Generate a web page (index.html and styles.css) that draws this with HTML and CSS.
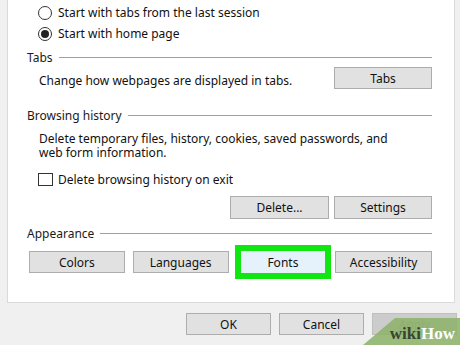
FILE: index.html
```html
<!DOCTYPE html>
<html>
<head>
<meta charset="utf-8">
<link rel="stylesheet" href="styles.css">
</head>
<body>
<div class="panel">
  <div class="radio-row"><span class="radio"></span><span>Start with tabs from the last session</span></div>
  <div class="radio-row"><span class="radio checked"></span><span>Start with home page</span></div>

  <div class="group-head head-tabs"><span>Tabs</span><span class="rule"></span></div>
  <div class="tabs-row">
    <span class="tabs-text">Change how webpages are displayed in tabs.</span>
    <button class="btn btn-tabs">Tabs</button>
  </div>

  <div class="group-head head-history"><span>Browsing history</span><span class="rule"></span></div>
  <div class="desc">
    <div class="desc-line">Delete temporary files, history, cookies, saved passwords, and</div>
    <div class="desc-line">web form information.</div>
  </div>
  <div class="check-row"><span class="check"></span><span>Delete browsing history on exit</span></div>
  <div class="history-buttons">
    <button class="btn btn-delete">Delete...</button>
    <button class="btn btn-settings">Settings</button>
  </div>

  <div class="group-head head-appearance"><span>Appearance</span><span class="rule"></span></div>
  <div class="appearance-buttons">
    <button class="btn btn-app">Colors</button>
    <button class="btn btn-app">Languages</button>
    <div class="highlight"><button class="btn btn-fonts">Fonts</button></div>
    <button class="btn btn-app">Accessibility</button>
  </div>
</div>
<div class="dialog-buttons">
  <button class="btn btn-dlg">OK</button>
  <button class="btn btn-dlg">Cancel</button>
  <button class="btn btn-dlg disabled">Apply</button>
</div>
<div class="watermark"><span class="wm-wiki">wiki</span><span class="wm-how">How</span></div>
</body>
</html>
```
FILE: styles.css
```css
html, body {
  margin: 0;
  padding: 0;
}
body {
  width: 460px;
  height: 345px;
  overflow: hidden;
  position: relative;
  background: #f0f0f0;
  font-family: "Noto Sans", "Open Sans", sans-serif;
  font-size: 12px;
  color: #111;
}
.panel {
  margin-left: 7px;
  width: 448px;
  height: 303px;
  box-sizing: border-box;
  background: #fff;
  border: 1px solid #dadada;
  border-top: none;
  padding: 2px 22px 0 19px;
}
.radio-row {
  display: flex;
  align-items: center;
  height: 21px;
  padding-left: 11px;
}
.radio {
  width: 14px;
  height: 14px;
  border: 1px solid #333;
  border-radius: 50%;
  margin-right: 6px;
  box-sizing: border-box;
  position: relative;
  background: #fff;
}
.radio.checked::after {
  content: "";
  position: absolute;
  left: 2px;
  top: 2px;
  width: 8px;
  height: 8px;
  border-radius: 50%;
  background: #222;
}
.group-head {
  display: flex;
  align-items: center;
  height: 20px;
  color: #1a1a1a;
}
.rule {
  flex: 1;
  height: 1px;
  background: #a0a0a0;
  margin-left: 6px;
}
.head-tabs { margin-top: 3px; }
.tabs-row {
  display: flex;
  justify-content: space-between;
  align-items: flex-start;
  padding-left: 12px;
}
.tabs-text {
  margin-top: 6px;
  line-height: 16px;
}
.btn {
  font-family: inherit;
  font-size: 12px;
  color: #111;
  background: #e1e1e1;
  border: 1px solid #adadad;
  height: 22px;
  padding: 0;
  margin: 0;
  box-sizing: border-box;
}
.btn-tabs { width: 98px; }
.head-history { margin-top: 16px; }
.desc {
  margin-top: 7px;
  padding-left: 12px;
}
.desc-line {
  height: 14px;
  line-height: 14px;
}
.check-row {
  display: flex;
  align-items: center;
  height: 16px;
  margin-top: 11px;
  padding-left: 11px;
}
.check {
  width: 15px;
  height: 13px;
  border: 1px solid #333;
  box-sizing: border-box;
  margin-right: 5px;
}
.history-buttons {
  display: flex;
  justify-content: flex-end;
  gap: 5px;
  margin-top: 9px;
}
.btn-delete { width: 99px; height: 23px; }
.btn-settings { width: 98px; height: 23px; }
.head-appearance { margin-top: 4px; }
.appearance-buttons {
  display: flex;
  align-items: center;
  margin-top: 2px;
  margin-left: 2px;
}
.btn-app { width: 96px; }
.appearance-buttons > :nth-child(1) { margin-right: 8px; }
.appearance-buttons > :nth-child(2) { margin-right: 6px; }
.appearance-buttons > :nth-child(3) { margin-right: 4px; }
.appearance-buttons > :nth-child(4) { width: 97px; }
.highlight {
  border: 6px solid #10e610;
  width: 97px;
  height: 34px;
  box-sizing: border-box;
}
.btn-fonts {
  display: block;
  width: 100%;
  height: 22px;
  background: #e5f1fb;
  border: none;
}
.dialog-buttons {
  display: flex;
  justify-content: flex-end;
  gap: 8px;
  margin-top: 10px;
  padding-right: 3px;
}
.btn-dlg { width: 85px; }
.btn-dlg.disabled {
  color: #9a9a9a;
  background: #cccccc;
  border-color: #bfbfbf;
}
.watermark {
  position: absolute;
  right: 0;
  bottom: 0;
  width: 97px;
  height: 27px;
  background: rgba(140, 178, 104, 0.85);
  clip-path: polygon(33% 0, 100% 0, 100% 100%, 0 100%);
  display: flex;
  align-items: flex-end;
  justify-content: flex-end;
  padding-right: 5px;
  box-sizing: border-box;
  font-family: "Liberation Serif", "DejaVu Serif", serif;
  font-weight: bold;
  font-size: 17px;
  line-height: 22px;
}
.wm-wiki { color: #39452f; }
.wm-how { color: #ffffff; }
```
